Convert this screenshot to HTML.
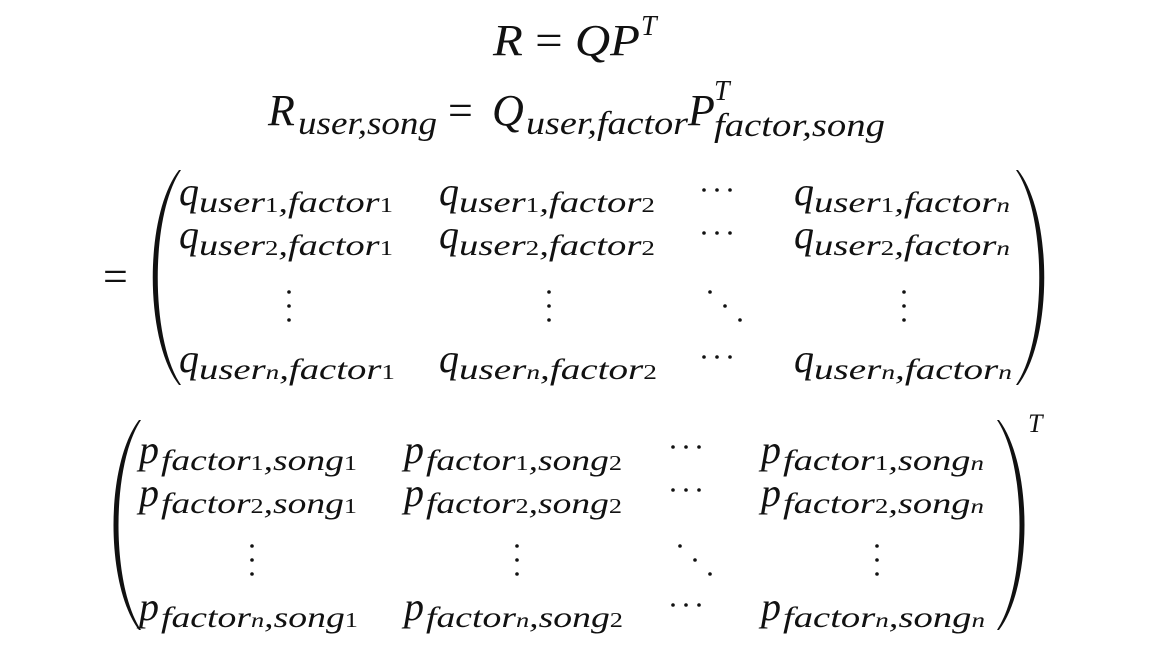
<!DOCTYPE html>
<html><head><meta charset="utf-8"><style>
html,body{margin:0;padding:0;background:#fff;}
svg{display:block}
text{font-family:"Liberation Serif",serif;font-style:italic;fill:#111}
.u{font-style:normal}
</style></head><body>
<svg width="1168" height="670" viewBox="0 0 1168 670" xmlns="http://www.w3.org/2000/svg">
<!-- line 1 -->
<text x="493" y="55" font-size="44" textLength="147" lengthAdjust="spacingAndGlyphs">R<tspan class="u"> = </tspan>QP</text>
<text x="641" y="35" font-size="28">T</text>
<!-- line 2 -->
<text x="268" y="125" font-size="44">R</text>
<text x="298" y="134" font-size="33" textLength="139" lengthAdjust="spacingAndGlyphs">user,song</text>
<text x="448" y="125" font-size="44" class="u">=</text>
<text x="492" y="125" font-size="44">Q</text>
<text x="526" y="134" font-size="33" textLength="162" lengthAdjust="spacingAndGlyphs">user,factor</text>
<text x="688" y="125" font-size="44">P</text>
<text x="714" y="100" font-size="28">T</text>
<text x="714" y="136" font-size="33" textLength="171" lengthAdjust="spacingAndGlyphs">factor,song</text>

<!-- matrix 1 -->
<text x="103" y="291" font-size="44" class="u">=</text>
<path d="M181,170 C150,215 150,340 181,385 L179,385 C144,340 144,215 179,170 Z" fill="#111"/>
<path d="M1016,170 C1047,215 1047,340 1016,385 L1018,385 C1053,340 1053,215 1018,170 Z" fill="#111"/>
<g font-size="40">
<text x="179" y="205">q</text><text x="439" y="205">q</text><text x="794" y="205">q</text>
<text x="179" y="248">q</text><text x="439" y="248">q</text><text x="794" y="248">q</text>
<text x="179" y="372">q</text><text x="439" y="372">q</text><text x="794" y="372">q</text>
</g>
<g font-size="30">
<text x="199" y="212" textLength="194" lengthAdjust="spacingAndGlyphs">user<tspan class="u" font-size="21">1</tspan>,factor<tspan class="u" font-size="21">1</tspan></text>
<text x="459" y="212" textLength="196" lengthAdjust="spacingAndGlyphs">user<tspan class="u" font-size="21">1</tspan>,factor<tspan class="u" font-size="21">2</tspan></text>
<text x="814" y="212" textLength="196" lengthAdjust="spacingAndGlyphs">user<tspan class="u" font-size="21">1</tspan>,factor<tspan font-size="21">n</tspan></text>
<text x="199" y="255" textLength="194" lengthAdjust="spacingAndGlyphs">user<tspan class="u" font-size="21">2</tspan>,factor<tspan class="u" font-size="21">1</tspan></text>
<text x="459" y="255" textLength="196" lengthAdjust="spacingAndGlyphs">user<tspan class="u" font-size="21">2</tspan>,factor<tspan class="u" font-size="21">2</tspan></text>
<text x="814" y="255" textLength="196" lengthAdjust="spacingAndGlyphs">user<tspan class="u" font-size="21">2</tspan>,factor<tspan font-size="21">n</tspan></text>
<text x="199" y="379" textLength="196" lengthAdjust="spacingAndGlyphs">user<tspan font-size="21">n</tspan>,factor<tspan class="u" font-size="21">1</tspan></text>
<text x="459" y="379" textLength="198" lengthAdjust="spacingAndGlyphs">user<tspan font-size="21">n</tspan>,factor<tspan class="u" font-size="21">2</tspan></text>
<text x="814" y="379" textLength="198" lengthAdjust="spacingAndGlyphs">user<tspan font-size="21">n</tspan>,factor<tspan font-size="21">n</tspan></text>
</g>
<g fill="#111">
<circle cx="704" cy="190" r="1.8"/><circle cx="717" cy="190" r="1.8"/><circle cx="730" cy="190" r="1.8"/>
<circle cx="704" cy="233" r="1.8"/><circle cx="717" cy="233" r="1.8"/><circle cx="730" cy="233" r="1.8"/>
<circle cx="704" cy="357" r="1.8"/><circle cx="717" cy="357" r="1.8"/><circle cx="730" cy="357" r="1.8"/>
<circle cx="289" cy="292" r="1.8"/><circle cx="289" cy="306" r="1.8"/><circle cx="289" cy="320" r="1.8"/>
<circle cx="549" cy="292" r="1.8"/><circle cx="549" cy="306" r="1.8"/><circle cx="549" cy="320" r="1.8"/>
<circle cx="904" cy="292" r="1.8"/><circle cx="904" cy="306" r="1.8"/><circle cx="904" cy="320" r="1.8"/>
<circle cx="710" cy="292" r="1.8"/><circle cx="725" cy="306" r="1.8"/><circle cx="740" cy="320" r="1.8"/>
</g>

<!-- matrix 2 -->
<path d="M141,420 C111,465 111,585 141,630 L139,630 C105,585 105,465 139,420 Z" fill="#111"/>
<path d="M997,420 C1027,465 1027,585 997,630 L999,630 C1033,585 1033,465 999,420 Z" fill="#111"/>
<text x="1028" y="432" font-size="26">T</text>
<g font-size="40">
<text x="139" y="463">p</text><text x="404" y="463">p</text><text x="761" y="463">p</text>
<text x="139" y="506">p</text><text x="404" y="506">p</text><text x="761" y="506">p</text>
<text x="139" y="620">p</text><text x="404" y="620">p</text><text x="761" y="620">p</text>
</g>
<g font-size="30">
<text x="161" y="470" textLength="196" lengthAdjust="spacingAndGlyphs">factor<tspan class="u" font-size="21">1</tspan>,song<tspan class="u" font-size="21">1</tspan></text>
<text x="426" y="470" textLength="196" lengthAdjust="spacingAndGlyphs">factor<tspan class="u" font-size="21">1</tspan>,song<tspan class="u" font-size="21">2</tspan></text>
<text x="783" y="470" textLength="201" lengthAdjust="spacingAndGlyphs">factor<tspan class="u" font-size="21">1</tspan>,song<tspan font-size="21">n</tspan></text>
<text x="161" y="513" textLength="196" lengthAdjust="spacingAndGlyphs">factor<tspan class="u" font-size="21">2</tspan>,song<tspan class="u" font-size="21">1</tspan></text>
<text x="426" y="513" textLength="196" lengthAdjust="spacingAndGlyphs">factor<tspan class="u" font-size="21">2</tspan>,song<tspan class="u" font-size="21">2</tspan></text>
<text x="783" y="513" textLength="201" lengthAdjust="spacingAndGlyphs">factor<tspan class="u" font-size="21">2</tspan>,song<tspan font-size="21">n</tspan></text>
<text x="161" y="627" textLength="197" lengthAdjust="spacingAndGlyphs">factor<tspan font-size="21">n</tspan>,song<tspan class="u" font-size="21">1</tspan></text>
<text x="426" y="627" textLength="197" lengthAdjust="spacingAndGlyphs">factor<tspan font-size="21">n</tspan>,song<tspan class="u" font-size="21">2</tspan></text>
<text x="783" y="627" textLength="202" lengthAdjust="spacingAndGlyphs">factor<tspan font-size="21">n</tspan>,song<tspan font-size="21">n</tspan></text>
</g>
<g fill="#111">
<circle cx="673" cy="447" r="1.8"/><circle cx="686" cy="447" r="1.8"/><circle cx="699" cy="447" r="1.8"/>
<circle cx="673" cy="490" r="1.8"/><circle cx="686" cy="490" r="1.8"/><circle cx="699" cy="490" r="1.8"/>
<circle cx="673" cy="605" r="1.8"/><circle cx="686" cy="605" r="1.8"/><circle cx="699" cy="605" r="1.8"/>
<circle cx="252" cy="546" r="1.8"/><circle cx="252" cy="560" r="1.8"/><circle cx="252" cy="574" r="1.8"/>
<circle cx="517" cy="546" r="1.8"/><circle cx="517" cy="560" r="1.8"/><circle cx="517" cy="574" r="1.8"/>
<circle cx="877" cy="546" r="1.8"/><circle cx="877" cy="560" r="1.8"/><circle cx="877" cy="574" r="1.8"/>
<circle cx="680" cy="546" r="1.8"/><circle cx="695" cy="560" r="1.8"/><circle cx="710" cy="574" r="1.8"/>
</g>
</svg>
</body></html>
